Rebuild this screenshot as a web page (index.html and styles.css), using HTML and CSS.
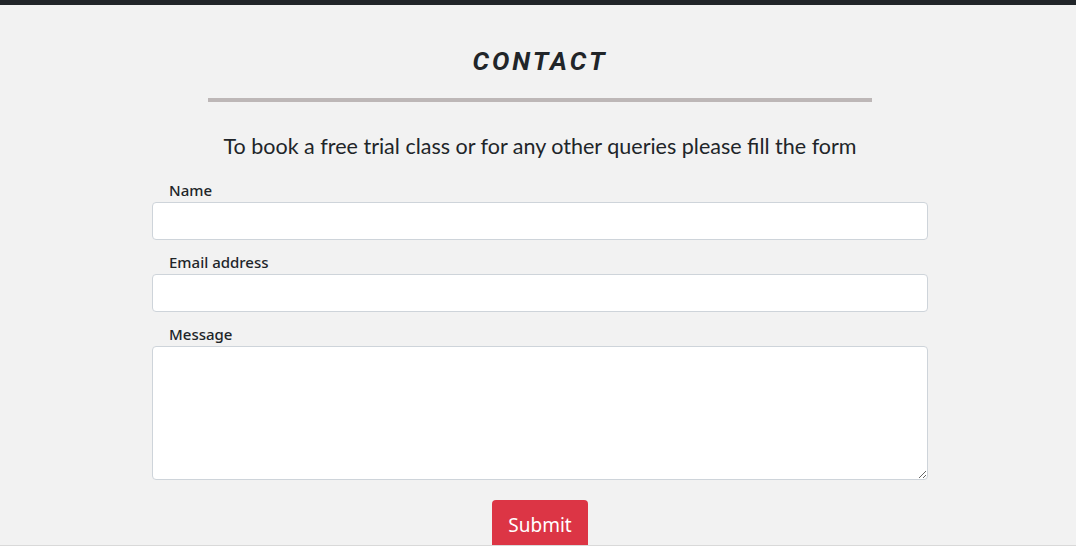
FILE: index.html
```html
<!DOCTYPE html>
<html lang="en">
<head>
<meta charset="utf-8">
<title>Contact</title>
<link rel="stylesheet" href="styles.css">
</head>
<body>
<div class="topbar"></div>
<section class="contact">
  <h1 class="title">CONTACT</h1>
  <div class="rule"></div>
  <p class="lead">To book a free trial class or for any other queries please fill the form</p>
  <form class="form">
    <div class="field">
      <label class="label" for="name">Name</label>
      <input class="control" id="name" type="text">
    </div>
    <div class="field">
      <label class="label" for="email">Email address</label>
      <input class="control" id="email" type="email">
    </div>
    <div class="field">
      <label class="label" for="msg">Message</label>
      <textarea class="control area" id="msg"></textarea>
    </div>
    <div class="actions">
      <button class="btn" type="button">Submit</button>
    </div>
  </form>
</section>
</body>
</html>
```
FILE: styles.css
```css
* { box-sizing: border-box; }
html, body { margin: 0; padding: 0; background: #ffffff; }
body { font-family: "Noto Sans", sans-serif; color: #212529; }
.topbar { height: 5px; background: #212529; }
.contact {
  height: 541px;
  background: #f2f2f2;
  border-bottom: 1px solid #d9d9d9;
  overflow: hidden;
  display: flex;
  flex-direction: column;
  align-items: center;
  padding-left: 4px;
}
.contact > * { flex-shrink: 0; }
.title {
  margin: 38px 0 0;
  font-family: Roboto, sans-serif;
  font-style: italic;
  font-weight: 700;
  font-size: 26px;
  letter-spacing: 3px;
  line-height: 36px;
  color: #212529;
}
.rule {
  width: 664px;
  height: 4px;
  background: #bdb7b7;
  margin-top: 19px;
}
.lead {
  margin: 30px 0 0;
  font-family: Lato, sans-serif;
  font-size: 21.5px;
  line-height: 28px;
  color: #212529;
}
.form {
  width: 776px;
  margin-top: 20px;
  display: flex;
  flex-direction: column;
  gap: 12px;
}
.field { display: flex; flex-direction: column; }
.label {
  font-family: "Noto Sans", sans-serif;
  font-size: 15px;
  font-weight: 500;
  line-height: 20px;
  padding-left: 17px;
  padding-bottom: 2px;
}
.control {
  display: block;
  width: 100%;
  height: 38px;
  border: 1px solid #ced4da;
  border-radius: 4px;
  background: #fff;
  font: inherit;
  padding: 6px 12px;
}
.area { height: 134px; resize: vertical; }
.actions { display: flex; justify-content: center; margin-top: 8px; }
.btn {
  width: 96px;
  height: 50px;
  flex: none;
  background: #dc3545;
  color: #fff;
  border: 0;
  border-radius: 4px;
  font-family: "Noto Sans", sans-serif;
  font-size: 19px;
  display: flex;
  align-items: flex-start;
  justify-content: center;
  padding: 12px 0 0;
  line-height: 26px;
}
```
